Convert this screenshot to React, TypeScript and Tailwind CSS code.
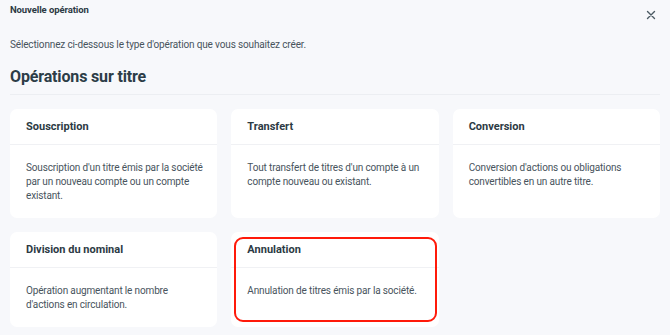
import React from "react";

type Op = { title: string; text: string; highlight?: boolean };

const ops: Op[] = [
  { title: "Souscription", text: "Souscription d'un titre émis par la société par un nouveau compte ou un compte existant." },
  { title: "Transfert", text: "Tout transfert de titres d'un compte à un compte nouveau ou existant." },
  { title: "Conversion", text: "Conversion d'actions ou obligations convertibles en un autre titre." },
  { title: "Division du nominal", text: "Opération augmentant le nombre d'actions en circulation." },
  { title: "Annulation", text: "Annulation de titres émis par la société.", highlight: true },
];

function Card({ op }: { op: Op }) {
  return (
    <div className="relative bg-white rounded-[7px] flex flex-col">
      <div className="h-[36px] flex items-center pt-[2px] px-4 border-b border-[#f0f1f4]">
        <span className="text-[11px] font-bold text-[#2c3a44]">{op.title}</span>
      </div>
      <div className="pl-4 pt-[16px] pb-[15px] pr-[9px] text-[10px] tracking-[-0.15px] leading-[14px] text-[#48545d]">
        {op.text}
      </div>
      {op.highlight && (
        <div className="absolute top-[5px] bottom-[5px] left-[3px] right-[2px] border-2 border-[#ff1a0a] rounded-[9px] pointer-events-none" />
      )}
    </div>
  );
}

export default function App() {
  return (
    <div
      className="w-[670px] h-[335px] bg-[#f7f8fb] overflow-hidden px-[10px]"
      style={{ fontFamily: "Roboto, 'Noto Sans', sans-serif" }}
    >
      <div className="flex items-center justify-between pt-[1px] h-[20px]">
        <span className="text-[9.5px] font-bold tracking-[-0.1px] text-[#2c3a44]">Nouvelle opération</span>
        <svg width="10" height="10" viewBox="0 0 10 10" className="mr-[4px] mt-[9px]">
          <path d="M1.5 1.5 L8.5 8.5 M8.5 1.5 L1.5 8.5" stroke="#4b5a63" strokeWidth="1.4" strokeLinecap="round" />
        </svg>
      </div>
      <p className="mt-[18px] text-[10px] tracking-[-0.15px] leading-[14px] text-[#48545d]">
        Sélectionnez ci-dessous le type d'opération que vous souhaitez créer.
      </p>
      <h1 className="mt-[14px] text-[16px] tracking-[-0.15px] leading-[22px] font-bold text-[#2c3d47] pb-[6px] border-b border-[#eceef2]">
        Opérations sur titre
      </h1>
      <div className="mt-[14px] grid grid-cols-3 gap-x-[14px] gap-y-[14px]">
        {ops.map((op) => (
          <Card key={op.title} op={op} />
        ))}
      </div>
    </div>
  );
}
